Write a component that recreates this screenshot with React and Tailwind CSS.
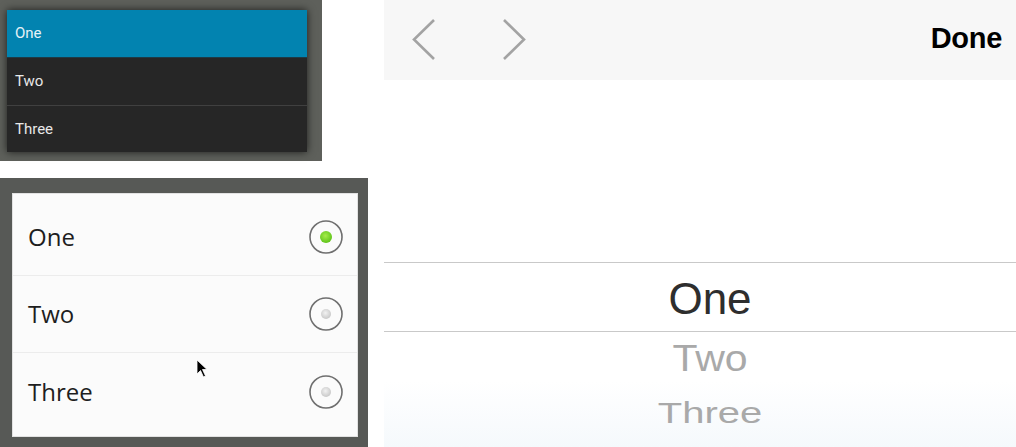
import React from 'react';

const Radio = ({ checked }) => (
  <svg width="36" height="36" viewBox="0 0 36 36">
    <defs>
      <radialGradient id="g-on" cx="45%" cy="40%" r="60%">
        <stop offset="0%" stopColor="#a6ec4a" />
        <stop offset="100%" stopColor="#5fc41a" />
      </radialGradient>
      <radialGradient id="g-off" cx="45%" cy="40%" r="60%">
        <stop offset="0%" stopColor="#f2f2f2" />
        <stop offset="100%" stopColor="#c8c8c8" />
      </radialGradient>
    </defs>
    <circle cx="18" cy="18" r="16" fill="#fbfbfb" stroke="#6f6f6f" strokeWidth="1.6" />
    <circle cx="18" cy="18" r={checked ? 6 : 5} fill={checked ? 'url(#g-on)' : 'url(#g-off)'} />
  </svg>
);

const Chevron = ({ dir }) => (
  <svg width="24" height="42" viewBox="0 0 24 42">
    <polyline
      points={dir === 'left' ? '22,1 2,20.5 22,40' : '2,1 22,20.5 2,40'}
      fill="none"
      stroke="#a3a3a3"
      strokeWidth="2.6"
    />
  </svg>
);

export default function App() {
  const dark = ['One', 'Two', 'Three'];

  return (
    <div className="w-[1016px] h-[447px] bg-white flex overflow-hidden" style={{ fontFamily: '"Liberation Sans", Arial, sans-serif' }}>
      {/* left column: android spinners */}
      <div className="w-[368px] flex flex-col">
        <div className="w-[322px] h-[161px] bg-[#5e605b] pt-[10px] pl-[7px]">
          <div className="w-[300px] shadow-[0_0_8px_rgba(0,0,0,0.7)] font-['Roboto',sans-serif] text-[15px]">
            <div className="h-[47px] bg-[#0283b0] text-[#e6f2f7] flex items-center pl-[8px]">One</div>
            <div className="h-[48px] bg-[#262626] text-[#e8e8e8] flex items-center pl-[8px] border-t border-[#1e3a46]">Two</div>
            <div className="h-[47px] bg-[#262626] text-[#e8e8e8] flex items-center pl-[8px] border-t border-[#404040]">Three</div>
          </div>
        </div>

        <div className="mt-[17px] h-[269px] bg-[#575956] pt-[15px] pl-[12px] pr-[10px] pb-[10px] relative">
          <div className="h-full bg-[#fbfbfb] border border-[#e2e2e2] pt-[5px] font-['Open_Sans',sans-serif] text-[24px] text-[#1e1e1e]">
            {dark.map((t, i) => (
              <div
                key={t}
                className={`h-[77px] flex items-center justify-between pl-[15px] pr-[13px] ${i < 2 ? 'border-b border-[#ececec]' : ''}`}
              >
                <span>{t}</span>
                <Radio checked={i === 0} />
              </div>
            ))}
          </div>
          {/* mouse pointer */}
          <svg className="absolute left-[196px] top-[181px]" width="14" height="20" viewBox="0 0 14 20">
            <path d="M1 1 L1 15 L4.5 11.5 L7.5 18 L9.5 17 L6.5 10.5 L11 10.5 Z" fill="#000" stroke="#fff" strokeWidth="0.8" />
          </svg>
        </div>
      </div>

      {/* right column: iOS picker */}
      <div className="ml-[16px] flex-1 flex flex-col">
        <div className="h-[80px] bg-[#f7f7f7] flex items-center pl-[28px] pr-[14px]">
          <Chevron dir="left" />
          <div className="ml-[66px]">
            <Chevron dir="right" />
          </div>
          <div className="ml-auto text-[29px] font-bold text-black tracking-[-0.3px] -mt-[3px]">Done</div>
        </div>
        <div className="flex-1 flex flex-col bg-gradient-to-b from-white from-[82%] to-[#f5f9fc]">
          <div className="mt-[182px] h-[70px] border-y border-[#c9c9c9] flex items-center justify-center pl-[20px] text-[44px] text-[#2e2e2e] pt-[3px]">
            One
          </div>
          <div className="h-[54px] flex items-center justify-center pl-[20px] text-[41px] text-[#a9a9a9] scale-y-[0.9]">
            Two
          </div>
          <div className="h-[50px] flex items-center justify-center pl-[20px] text-[40px] text-[#a9a9a9] scale-y-[0.72] mt-[2px]">
            Three
          </div>
        </div>
      </div>
    </div>
  );
}
